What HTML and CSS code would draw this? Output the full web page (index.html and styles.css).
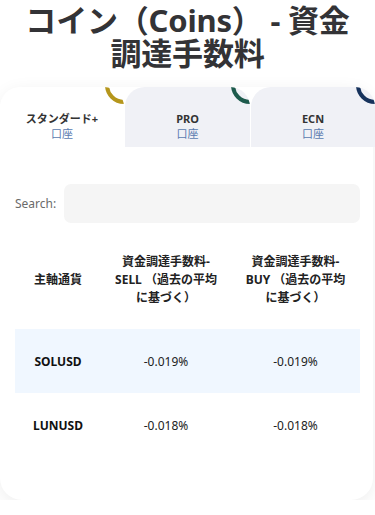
FILE: index.html
```html
<!DOCTYPE html>
<html lang="ja">
<head>
<meta charset="utf-8">
<title>コイン（Coins） - 資金調達手数料</title>
<link rel="stylesheet" href="styles.css">
</head>
<body>
<h1 class="title">コイン（Coins） - 資金<br>調達手数料</h1>
<div class="card">
  <div class="tabs">
    <div class="tab active">
      <span class="ring ring-gold"></span>
      <span class="tab-name">スタンダード+</span>
      <span class="tab-sub">口座</span>
    </div>
    <div class="tab">
      <span class="ring ring-green"></span>
      <span class="tab-name">PRO</span>
      <span class="tab-sub">口座</span>
    </div>
    <div class="tab">
      <span class="ring ring-navy"></span>
      <span class="tab-name">ECN</span>
      <span class="tab-sub">口座</span>
    </div>
  </div>
  <div class="content">
    <label class="search">
      <span class="search-label">Search:</span>
      <input class="search-input" type="search">
    </label>
    <div class="table">
      <div class="row head">
        <div class="cell c1">主軸通貨</div>
        <div class="cell c2">資金調達手数料-SELL （過去の平均に基づく）</div>
        <div class="cell c3">資金調達手数料-BUY （過去の平均に基づく）</div>
      </div>
      <div class="row odd">
        <div class="cell c1 sym">SOLUSD</div>
        <div class="cell c2">-0.019%</div>
        <div class="cell c3">-0.019%</div>
      </div>
      <div class="row">
        <div class="cell c1 sym">LUNUSD</div>
        <div class="cell c2">-0.018%</div>
        <div class="cell c3">-0.018%</div>
      </div>
    </div>
  </div>
</div>
</body>
</html>
```

FILE: styles.css
```css
* { box-sizing: border-box; }
html, body { margin: 0; padding: 0; background: #ffffff; }
body {
  font-family: "Noto Sans", "Noto Sans CJK JP", sans-serif;
  color: #333333;
  width: 375px;
}
.title {
  margin: 0;
  padding-top: 4px;
  font-family: "Noto Sans", "Noto Sans CJK JP", sans-serif;
  font-size: 31px;
  line-height: 33px;
  font-weight: 700;
  text-align: center;
  color: #333336;
  letter-spacing: -0.2px;
}
.card {
  margin-top: 17px;
  margin-right: 2px;
  background: #ffffff;
  border-radius: 22px;
  box-shadow: 0 4px 18px rgba(0, 0, 0, 0.07);
  padding-bottom: 43px;
}
.tabs {
  display: grid;
  grid-template-columns: 124px 125px 1fr;
  column-gap: 1px;
  height: 60px;
  margin-right: -2px;
}
.tab {
  position: relative;
  overflow: hidden;
  background: #f0f1f6;
  border-radius: 20px 20px 0 0;
  display: flex;
  flex-direction: column;
  align-items: center;
  justify-content: center;
  padding-top: 18px;
}
.tab.active { background: #ffffff; }
.tab-name {
  font-size: 11px;
  line-height: 15px;
  font-weight: 700;
  color: #333333;
}
.tab-sub {
  font-size: 11px;
  line-height: 15px;
  color: #5a7bb0;
}
.ring {
  position: absolute;
  top: -21px;
  right: -19px;
  width: 38px;
  height: 38px;
  border-radius: 50%;
  border: 4px solid #b5961c;
}
.ring-green { border-color: #1d5a4c; }
.ring-navy { border-color: #16325c; }
.content {
  padding: 37px 13px 0 15px;
}
.search {
  display: flex;
  align-items: center;
  gap: 6px;
}
.search-label {
  font-size: 12px;
  color: #6a6a6a;
  width: 43px;
}
.search-input {
  flex: 1;
  height: 39px;
  border: none;
  border-radius: 7px;
  background: #f5f5f5;
  outline: none;
  margin: 0;
}
.table {
  margin-top: 4px;
  display: flex;
  flex-direction: column;
}
.row {
  display: grid;
  grid-template-columns: 86px 130px 1fr;
  height: 64px;
  align-items: center;
  font-size: 12px;
}
.row.head {
  height: 102px;
  padding-top: 4px;
  font-weight: 700;
  line-height: 18px;
}
.row.odd { background: #f0f7ff; }
.cell {
  text-align: center;
  padding: 0 9px;
}
.sym { font-weight: 700; color: #111111; }
.row .c2, .row .c3 { color: #222222; }
.head .cell { color: #222222; }
```
